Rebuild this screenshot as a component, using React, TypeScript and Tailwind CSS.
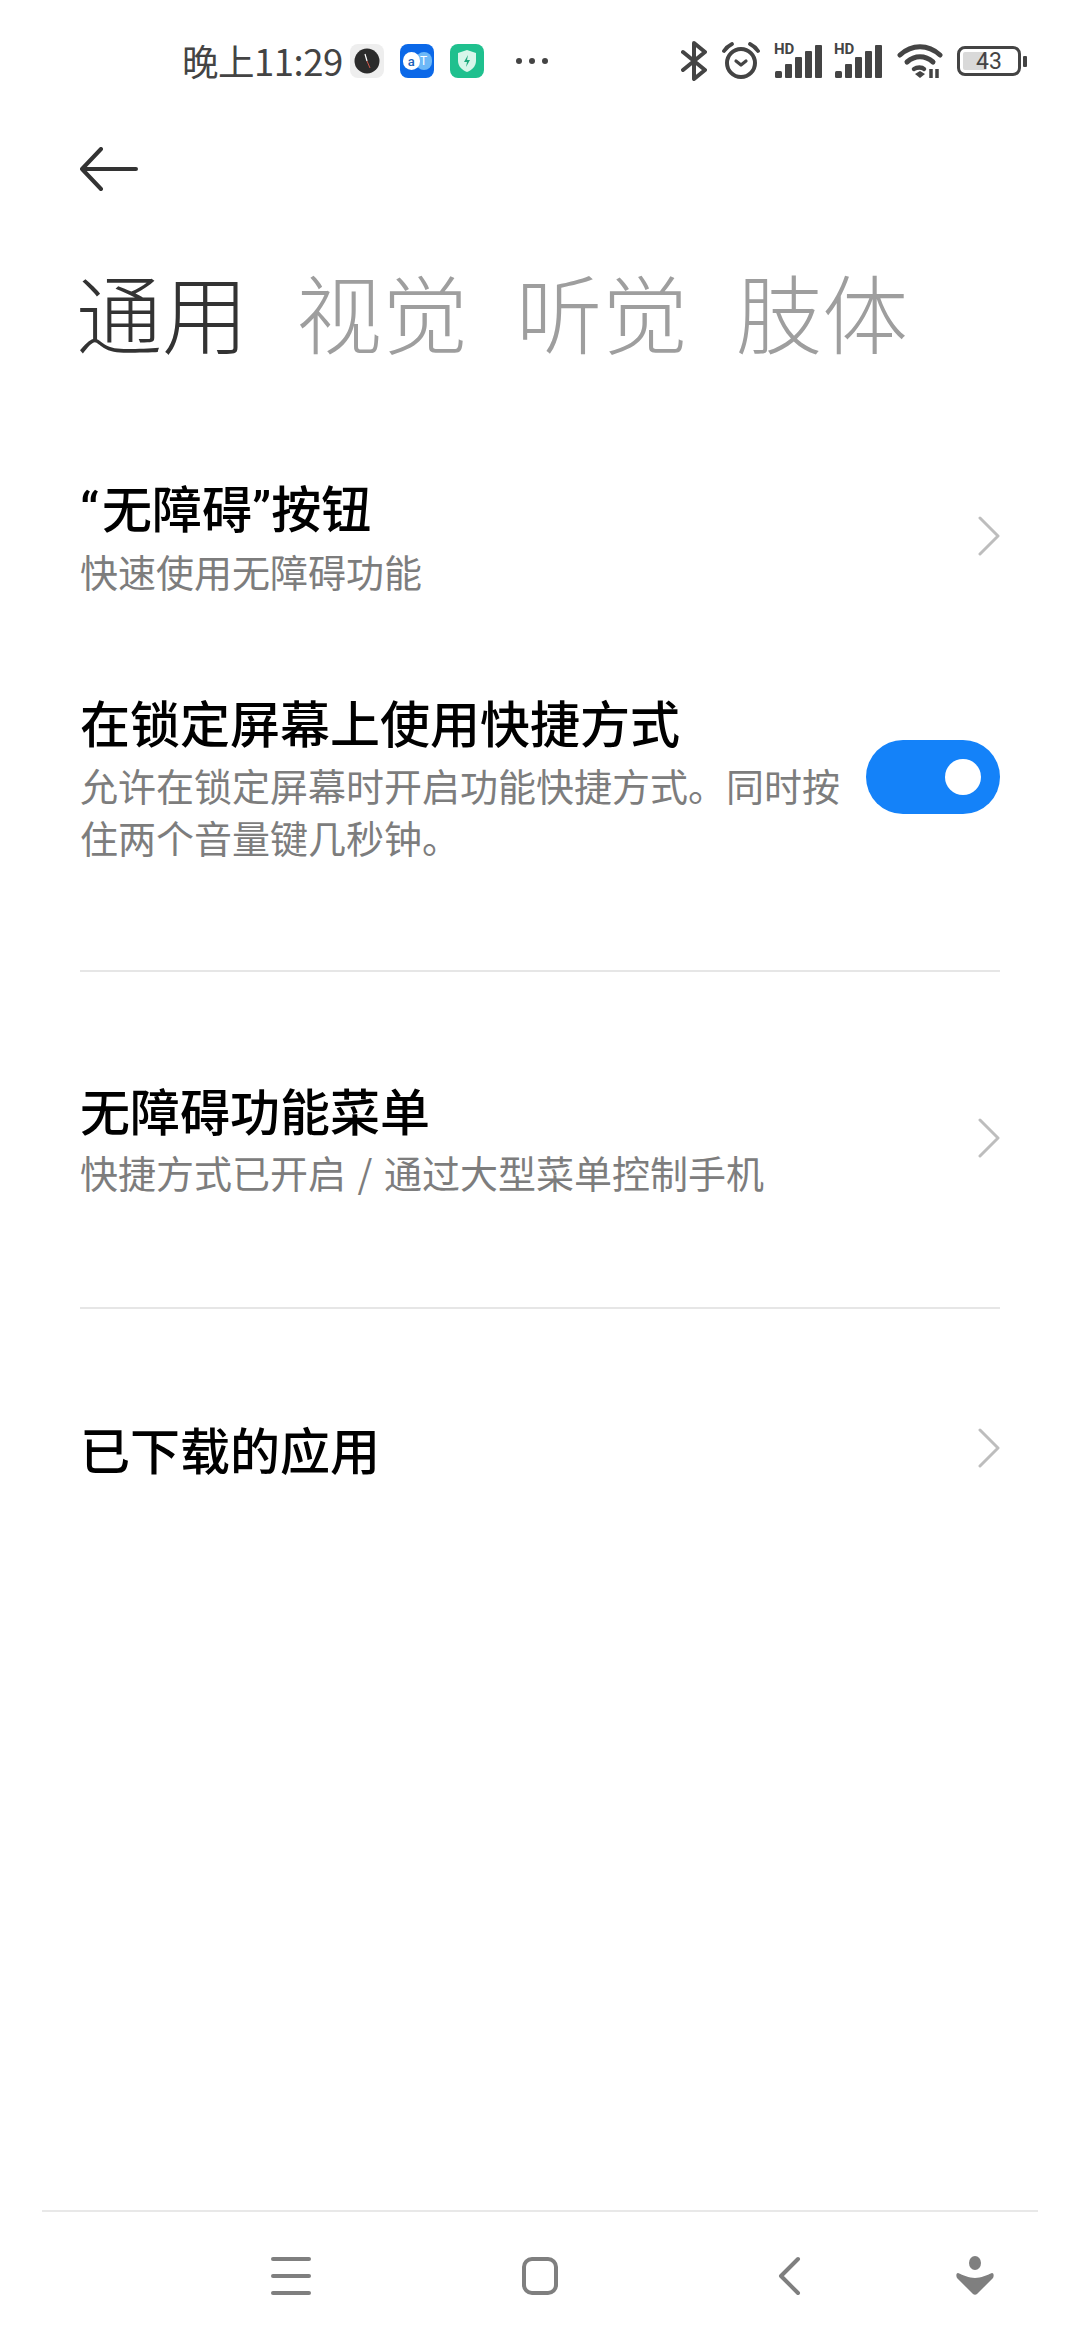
const cjk = "font-['Noto_Sans_CJK_SC','Noto_Sans',sans-serif]"

function Chevron() {
  return (
    <svg width="22" height="40" viewBox="0 0 22 40" fill="none" className="shrink-0">
      <path d="M2 2l18 18L2 38" stroke="#bdbdbd" strokeWidth="3" strokeLinecap="round" strokeLinejoin="round" />
    </svg>
  )
}

function Signal() {
  return (
    <div className="relative h-[36px] w-[48px]">
      <span className="absolute left-0 top-[-1px] text-[15px] font-bold leading-[15px] text-[#444] font-['Roboto',sans-serif]">HD</span>
      <svg width="48" height="36" viewBox="0 0 48 36" fill="#444" className="block">
        <rect x="1" y="28" width="7" height="7" rx="1.5" />
        <rect x="11" y="21" width="7" height="14" rx="1" />
        <rect x="21" y="14" width="7" height="21" rx="1" />
        <rect x="31" y="8" width="7" height="27" rx="1" />
        <rect x="41" y="2" width="7" height="33" rx="1" />
      </svg>
    </div>
  )
}

function StatusBar() {
  return (
    <div className="flex h-[122px] items-center pl-[182px] pr-[53px]">
      <span className={`text-[36.5px] leading-none tracking-[-0.5px] text-[#444] ${cjk}`}>晚上11:29</span>
      <div className="ml-[7px] flex h-[34px] w-[34px] items-center justify-center rounded-[8px] bg-[#eeeeee]">
        <svg width="26" height="26" viewBox="0 0 26 26">
          <circle cx="13" cy="13" r="12.5" fill="#2b2b2b" />
          <path d="M11 6l2 7" stroke="#fff" strokeWidth="1.2" />
          <path d="M13 13l3 7" stroke="#d0574a" strokeWidth="1" />
        </svg>
      </div>
      <div className="relative ml-[16px] h-[34px] w-[34px] rounded-[8px] bg-[#0b68e8]">
        <span className="absolute left-[16px] top-[8px] flex h-[18px] w-[16px] items-center justify-center rounded-full bg-[#6db8f7] text-[12px] leading-none text-white font-['Roboto',sans-serif]">T</span>
        <span className="absolute left-[3px] top-[8px] flex h-[18px] w-[17px] items-center justify-center rounded-full bg-white text-[13px] font-medium leading-none text-[#1c5fb8] font-['Roboto',sans-serif]">a</span>
      </div>
      <div className="ml-[16px] flex h-[34px] w-[34px] items-center justify-center rounded-[8px] bg-[#1fc08e]">
        <svg width="22" height="24" viewBox="0 0 22 24">
          <path d="M11 1l9 3v8c0 5-4 9-9 11C6 21 2 17 2 12V4z" fill="#d8f6ea" />
          <path d="M12 6l-4 7h3l-1 5 4-7h-3z" fill="#1fa97d" />
        </svg>
      </div>
      <div className="ml-[32px] flex items-center gap-[7px]">
        <span className="h-[6px] w-[6px] rounded-full bg-[#444]" />
        <span className="h-[6px] w-[6px] rounded-full bg-[#444]" />
        <span className="h-[6px] w-[6px] rounded-full bg-[#444]" />
      </div>
      <div className="ml-auto flex items-center">
        <svg width="26" height="40" viewBox="0 0 26 40" fill="none">
          <path d="M2 11l22 18-11 9V2l11 9L2 29" stroke="#444" strokeWidth="4" strokeLinecap="round" strokeLinejoin="round" />
        </svg>
        <svg width="38" height="38" viewBox="0 0 38 38" fill="none" className="ml-[15px]">
          <circle cx="19" cy="21" r="14" stroke="#444" strokeWidth="4" />
          <path d="M14 19l5 4 5-4" stroke="#444" strokeWidth="3.2" strokeLinecap="round" strokeLinejoin="round" />
          <path d="M2 9c2-3 4-5 8-7M36 9c-2-3-4-5-8-7" stroke="#444" strokeWidth="3.8" strokeLinecap="round" />
        </svg>
        <div className="ml-[14px]"><Signal /></div>
        <div className="ml-[12px]"><Signal /></div>
        <svg width="46" height="36" viewBox="0 0 46 36" fill="none" className="ml-[15px]">
          <path d="M3 12c12-11 28-11 40 0" stroke="#444" strokeWidth="5" strokeLinecap="round" />
          <path d="M10 19c8-7 18-7 26 0" stroke="#444" strokeWidth="5" strokeLinecap="round" />
          <path d="M17 26c3-2 8-2 10 0" stroke="#444" strokeWidth="4.5" strokeLinecap="round" />
          <path d="M18 31l5-3 5 3-5 4z" fill="#444" />
          <path d="M34 26v9M40 26v9" stroke="#444" strokeWidth="3.5" />
        </svg>
        <div className="ml-[14px] flex items-center">
          <div className="relative flex h-[30px] w-[64px] items-center justify-center rounded-[8px] border-[3px] border-[#444]">
            <span className="absolute left-[3px] top-[3px] h-[18px] w-[24px] rounded-[2px] bg-[#d9d9d9]" />
            <span className="relative text-[23px] leading-none text-[#444] font-['Roboto',sans-serif]">43</span>
          </div>
          <span className="ml-[2px] h-[11px] w-[4px] rounded-[1px] bg-[#444]" />
        </div>
      </div>
    </div>
  )
}

function Row({ title, sub, tight, className }: { title: React.ReactNode; sub?: string; tight?: boolean; className?: string }) {
  return (
    <div className={`flex items-center justify-between ${className ?? ''}`}>
      <div>
        <div className="text-[50px] font-medium leading-[60px] text-black">{title}</div>
        {sub && (
          <div className={`${tight ? 'mt-[5px]' : 'mt-[8px]'} text-[38px] leading-[50px] text-[#7d7d7d] [word-spacing:3px]`}>{sub}</div>
        )}
      </div>
      <Chevron />
    </div>
  )
}

export default function App() {
  return (
    <div className={`relative flex h-[2340px] w-[1080px] flex-col overflow-hidden bg-white ${cjk}`}>
      <StatusBar />

      {/* back */}
      <div className="pl-[80px] pt-[25px]">
        <svg width="58" height="44" viewBox="0 0 58 44" fill="none" className="block">
          <path d="M21 2L2 22l19 20M2 22h54" stroke="#333" strokeWidth="4" strokeLinecap="round" strokeLinejoin="round" />
        </svg>
      </div>

      {/* tabs */}
      <div className="mt-[60px] flex gap-[48px] pl-[76px] text-[86px] font-light leading-[120px] text-[#9e9e9e]">
        <span className="text-[#333]">通用</span>
        <span>视觉</span>
        <span>听觉</span>
        <span>肢体</span>
      </div>

      <div className="mt-[105px] px-[80px]">
        <Row
          tight
          title={
            <>
              <span className="pr-[3px] font-['Roboto',sans-serif]">“</span>无障碍<span className="font-['Roboto',sans-serif]">”</span>按钮
            </>
          }
          sub="快速使用无障碍功能"
        />

        <div className="mt-[95px] flex items-center justify-between">
          <div className="w-[770px]">
            <div className="whitespace-nowrap text-[50px] font-medium leading-[60px] text-black">在锁定屏幕上使用快捷方式</div>
            <div className="mt-[8px] text-[38px] leading-[52px] text-[#7d7d7d]">允许在锁定屏幕时开启功能快捷方式。同时按住两个音量键几秒钟。</div>
          </div>
          <div className="flex h-[74px] w-[134px] items-center justify-end rounded-full bg-[#1482f9] pr-[19px]">
            <span className="h-[36px] w-[36px] rounded-full bg-white" />
          </div>
        </div>

        <div className="mt-[107px] h-[2px] bg-[#e6e6e6]" />

        <Row title="无障碍功能菜单" sub="快捷方式已开启 / 通过大型菜单控制手机" className="mt-[107px]" />

        <div className="mt-[110px] h-[2px] bg-[#e6e6e6]" />

        <Row title="已下载的应用" className="mt-[109px]" />
      </div>

      {/* nav bar */}
      <div className="mx-[42px] mt-auto flex h-[130px] items-center border-t-2 border-[#e8e8e8] pl-[229px]">
        <div className="flex w-[40px] flex-col gap-[13px]">
          <span className="h-[4px] rounded-full bg-[#7f7f7f]" />
          <span className="h-[4px] rounded-full bg-[#7f7f7f]" />
          <span className="h-[4px] rounded-full bg-[#7f7f7f]" />
        </div>
        <div className="ml-[211px] h-[38px] w-[36px] rounded-[10px] border-[4px] border-[#7f7f7f]" />
        <svg width="24" height="40" viewBox="0 0 24 40" fill="none" className="ml-[219px]">
          <path d="M21 3L4 20l17 17" stroke="#7f7f7f" strokeWidth="4" strokeLinecap="round" strokeLinejoin="round" />
        </svg>
        <svg width="38" height="40" viewBox="0 0 38 40" fill="#7f7f7f" className="ml-[155px]">
          <ellipse cx="19" cy="7" rx="6" ry="7" />
          <path d="M2 17c5 2 11 5 17 5s12-3 17-5c2 0 2 3 1 5L21 38c-1 1-3 1-4 0L1 22c-1-2-1-5 1-5z" />
        </svg>
      </div>
    </div>
  )
}
